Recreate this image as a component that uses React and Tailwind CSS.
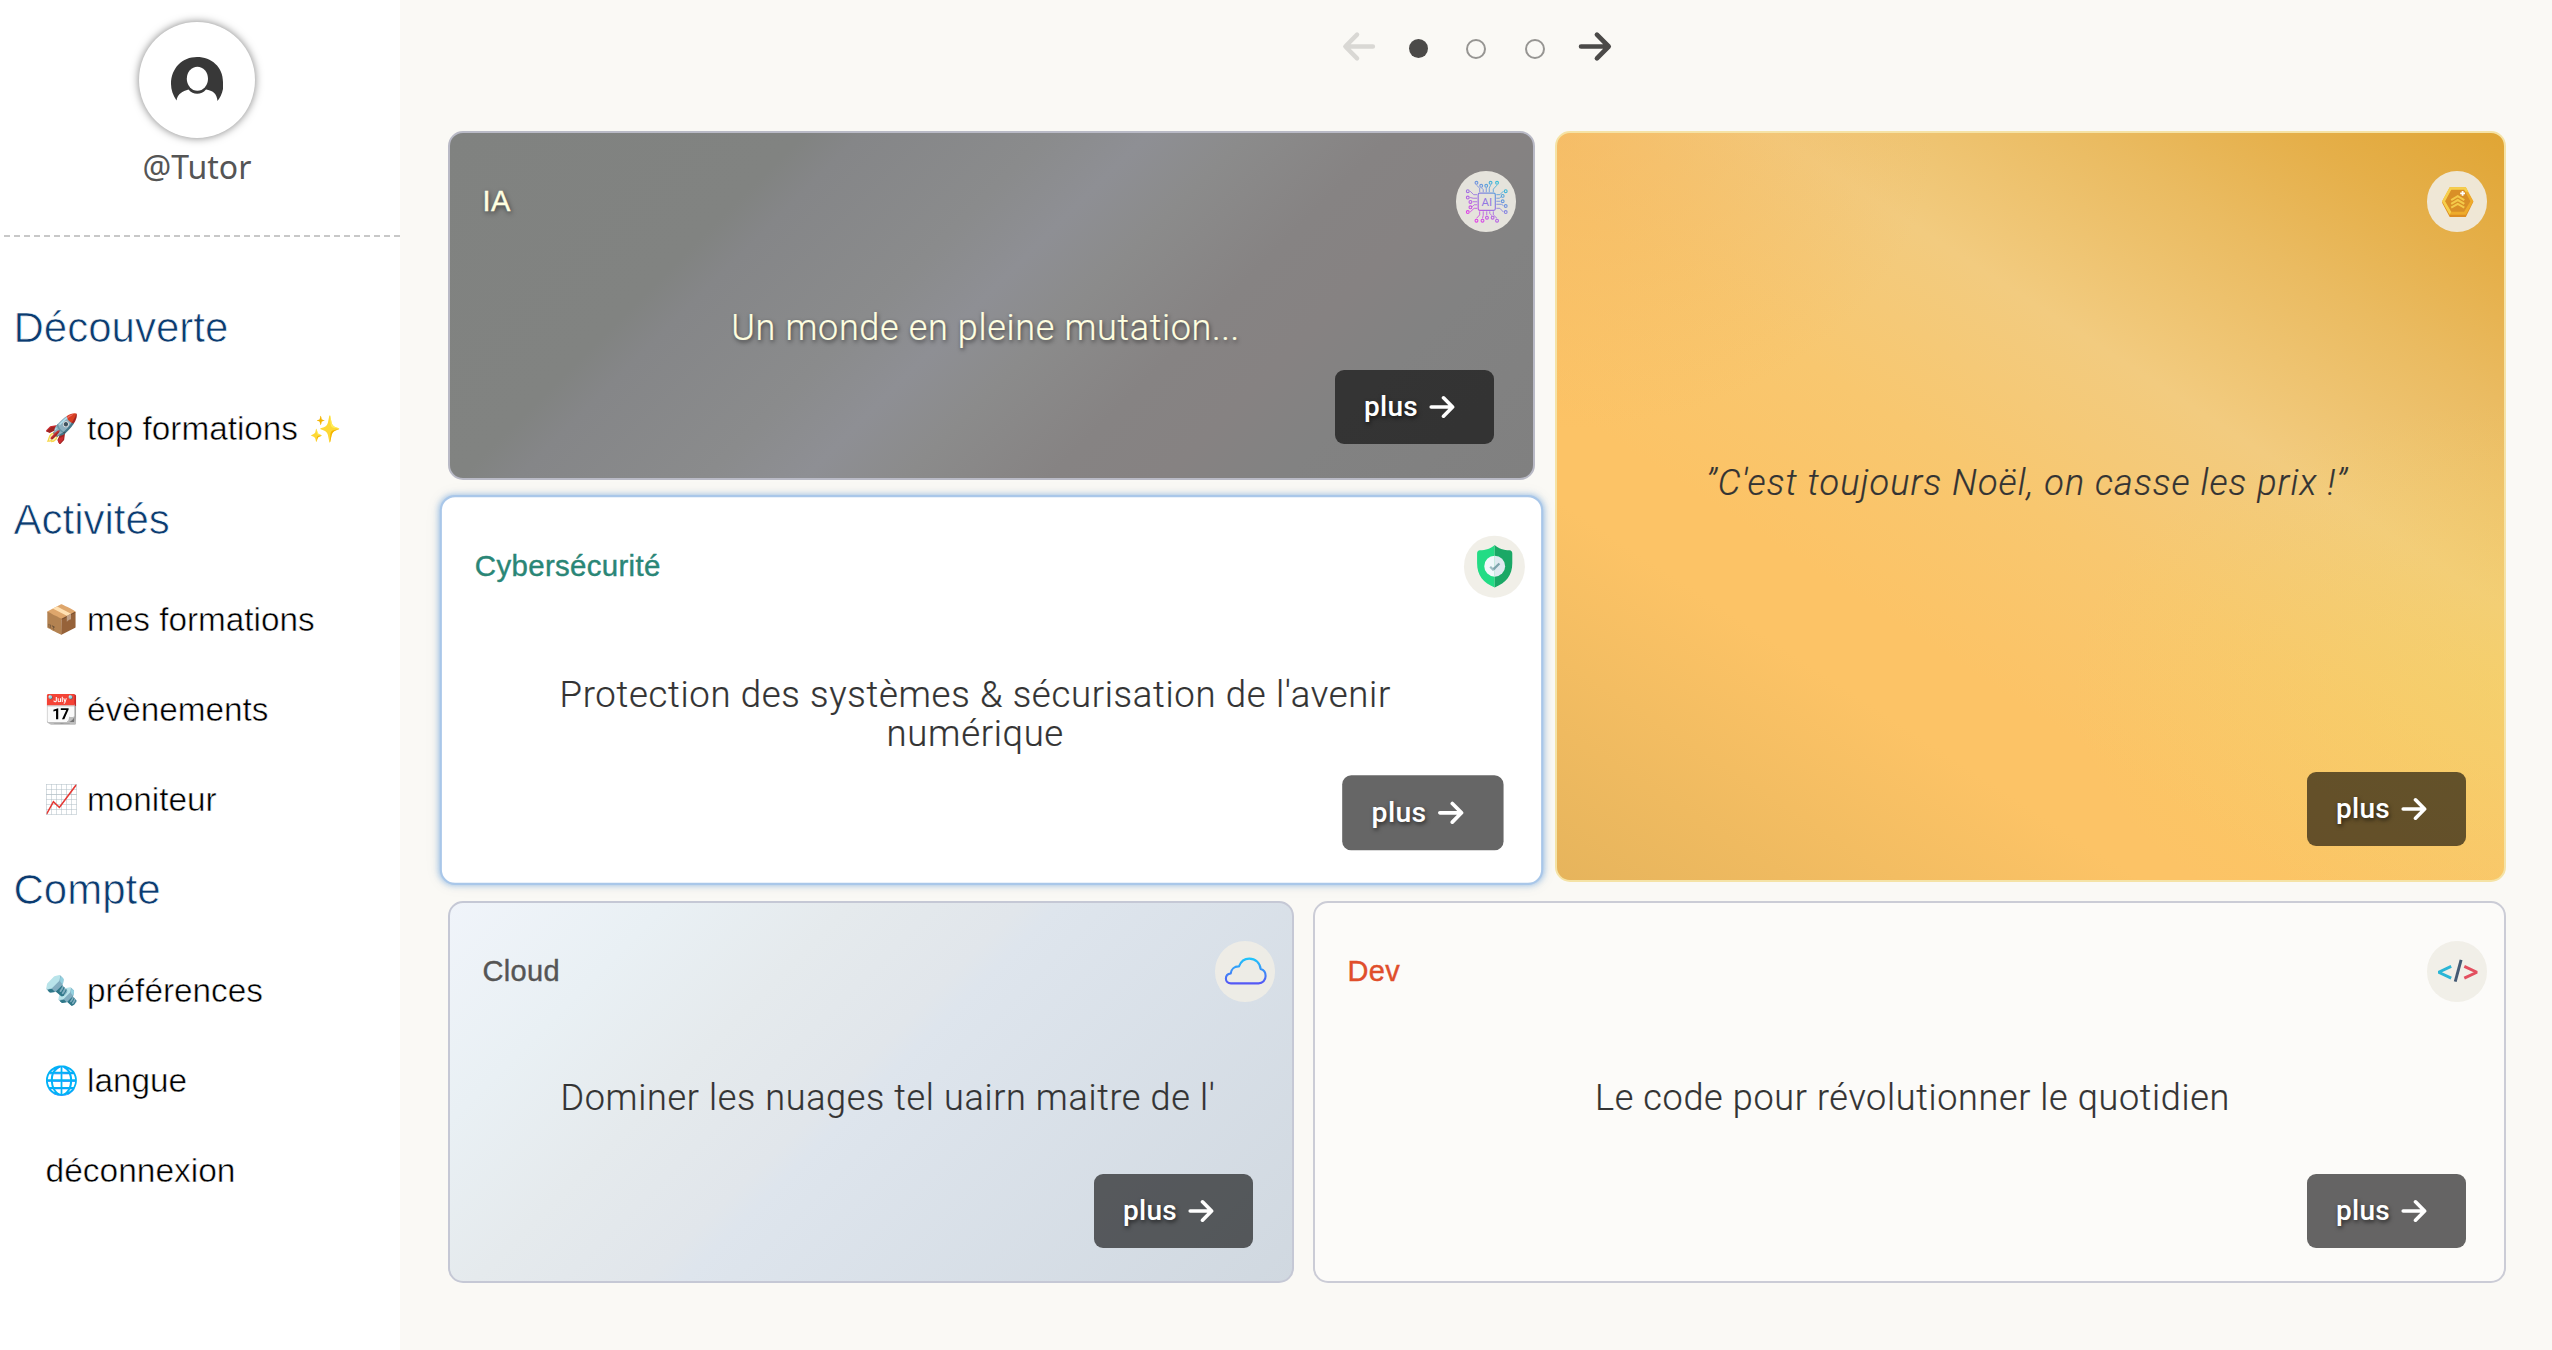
import React from "react";

function Arrow({ className, strokeWidth = 4 }) {
  return (
    <svg className={className} viewBox="0 0 26 24" fill="none" stroke="currentColor" strokeWidth={strokeWidth} strokeLinecap="round" strokeLinejoin="round">
      <path d="M2.2 12H23.2M14.5 2.8L23.6 12L14.5 21.2" />
    </svg>
  );
}

const traces = [
  ["M23.5 21V17L20.3 14", 20.3, 11.7],
  ["M27 21V18.5L25 16.5", 25, 14.7],
  ["M30 21V16.5", 30, 14.7],
  ["M33 21V17L34.3 14", 34.3, 11.7],
  ["M37 21V18L40.7 14", 40.7, 11.7],
  ["M21 23.5H17.5L14 20", 11.7, 20],
  ["M21 27H17L14 26.3", 11.7, 26.3],
  ["M21 30.5H16.5", 14.3, 30.7],
  ["M21 33.5H18L16 35.5", 14.3, 36],
  ["M21 37H18L14 40.7", 11.7, 40.7],
  ["M40 23.5H43.5L47 20", 49.3, 20],
  ["M40 27H43L44.8 25.5", 46.3, 24.7],
  ["M40 30H44", 46.3, 30],
  ["M40 33H45L47 34.2", 49.3, 34.7],
  ["M40 37H43.5L47 40.7", 49.3, 40.7],
  ["M23.5 40V43.5L20.3 47", 20.3, 49.3],
  ["M27 40V44L26.3 47", 26.3, 49.3],
  ["M30.5 40V44", 30.7, 46.3],
  ["M33.5 40V42L35.5 44.3", 36.3, 46.3],
  ["M37 40V43.5L40.7 47", 40.7, 49.3],
];

function AiIcon() {
  return (
    <svg viewBox="0 0 60 60" className="size-full" fill="none">
      <defs>
        <linearGradient id="ai" gradientUnits="userSpaceOnUse" x1="46" y1="12" x2="18" y2="48">
          <stop offset="0" stopColor="#2fc4d6" />
          <stop offset="0.5" stopColor="#8f7fe0" />
          <stop offset="1" stopColor="#e33fe6" />
        </linearGradient>
      </defs>
      <g stroke="url(#ai)">
        <rect x="22" y="22" width="17" height="17" rx="1.5" strokeWidth="1.2" />
        {traces.map(([d, cx, cy]) => (
          <g key={d}>
            <path d={d} strokeWidth="0.9" />
            <circle cx={cx} cy={cy} r="1.4" strokeWidth="1.1" />
          </g>
        ))}
      </g>
      <text x="30.6" y="34.6" textAnchor="middle" fill="#9278e2" fontSize="11.5" fontFamily="Roboto, sans-serif" fontWeight="400">AI</text>
    </svg>
  );
}

function ShieldIcon() {
  return (
    <svg viewBox="0 0 60 60" className="size-full">
      <path d="M30 9C26.5 12.5 21 14 15.5 14.3C13.8 14.5 12.9 15.5 12.8 17.3V27C12.8 38.5 19 46.5 30 50.5Z" fill="#22dc85" />
      <path d="M30 9C33.5 12.5 39 14 44.5 14.3C46.2 14.5 47.1 15.5 47.2 17.3V27C47.2 38.5 41 46.5 30 50.5Z" fill="#1aa866" />
      <path d="M30 19.6A10.2 10.2 0 0 0 30 40Z" fill="#f1f8fb" />
      <path d="M30 19.6A10.2 10.2 0 0 1 30 40Z" fill="#dfe9f0" />
      <path d="M25.6 30.3L28.4 33L30 31.8" fill="none" stroke="#9dbcc3" strokeWidth="2.2" />
      <path d="M29 32.6L34.6 27.2" fill="none" stroke="#7ea3ad" strokeWidth="2.2" />
    </svg>
  );
}

function MedalIcon() {
  return (
    <svg viewBox="0 0 60 60" className="size-full">
      <path d="M22.5 17.5H38.5L46 30.5L38.5 45.7H22.5L15 31.5Z" fill="#dd8d22" />
      <path d="M22.5 16H38.5L46 30L38.5 43.3H22.5L15 30Z" fill="#eeab2b" />
      <path d="M22.5 16H38.5L41 20.5L24 18.8L18.2 30L24 40.5L22.5 43.3L15 30Z" fill="#f6cf4c" />
      <path d="M24.2 18.5H36.8L43 30L36.8 40.3H24.2L18 30Z" fill="#d98f27" />
      <g fill="none" stroke="#f4ca49" strokeWidth="2">
        <path d="M24 28.8L30.5 25L37 28.8" />
        <path d="M24 32.6L30.5 28.8L37 32.6" />
        <path d="M24 36.4L30.5 32.6L37 36.4" />
      </g>
      <path d="M35.3 19.8V24.6M32.9 22.2H37.7" stroke="#fff" strokeWidth="1.8" />
    </svg>
  );
}

function CloudIcon() {
  return (
    <svg viewBox="0 0 60 60" className="size-full" fill="none">
      <defs>
        <linearGradient id="cloud" x1="0" y1="0" x2="0" y2="1">
          <stop offset="0" stopColor="#20c4fb" />
          <stop offset="1" stopColor="#5558f5" />
        </linearGradient>
      </defs>
      <path
        d="M15.8 42C12.8 42 10.8 39.8 10.8 37.2C10.8 34.4 12.8 32.5 15.6 32.2C16 27.8 19.4 25 23.8 25.2C25.6 20.4 29.6 17.5 34 17.5C40 17.5 44.8 21.8 45.2 27.8C48.3 28.6 50.2 31.4 50.2 34.8C50.2 39 47.2 42 43.2 42Z"
        stroke="url(#cloud)"
        strokeWidth="2.1"
        strokeLinejoin="round"
      />
    </svg>
  );
}

function CodeIcon() {
  return (
    <svg viewBox="0 0 60 60" className="size-full" fill="none" strokeWidth="2.9" strokeLinejoin="bevel">
      <path d="M24 25.2L11.5 31L24 36.8" stroke="#2bb6d6" />
      <path d="M33.8 18.8L28 40.2" stroke="#445a74" />
      <path d="M37 25.2L49.5 31L37 36.8" stroke="#e34f5f" />
    </svg>
  );
}

function Card({ className, title, titleClass, icon, iconClass = "mr-[17px]", text, textClass, buttonClass = "mr-[38px]" }) {
  return (
    <article className={`flex shrink-0 flex-col rounded-[15px] border-2 pt-[38px] ${className}`}>
      <header className="flex h-[61px] items-center justify-between pl-[32.5px]">
        <h3 className={`font-['Liberation_Sans',sans-serif] text-[29px] leading-none tracking-[0.32px] [-webkit-text-stroke:0.4px_currentColor] ${titleClass}`}>{title}</h3>
        <span className={`size-[60.5px] shrink-0 overflow-hidden rounded-full bg-[#f0ede6]/90 ${iconClass}`}>{icon}</span>
      </header>
      <p className={`text-center text-4xl leading-[38px] font-light tracking-[0.66px] [-webkit-text-stroke:0.2px_currentColor] ${textClass}`}>{text}</p>
      <button className={`mt-auto flex h-[74px] w-[159px] items-center self-end rounded-[9px] bg-black/60 pl-[29px] text-white ${buttonClass}`}>
        <span className="w-[65px] text-left text-[28px] leading-none font-medium tracking-[0.3px] [text-shadow:1px_2px_4px_rgba(0,0,0,0.6)]">plus</span>
        <Arrow className="h-6 w-[26px]" strokeWidth={3.6} />
      </button>
    </article>
  );
}

function Heading({ children, className }) {
  return (
    <h2 className={`h-12 pl-[13.5px] text-[42px] leading-[48px] text-[#0b3b70] [-webkit-text-stroke:0.7px_white] ${className}`}>{children}</h2>
  );
}

function Item({ emoji, children, after }) {
  return (
    <li className="flex h-[90px] items-center pl-[44px] text-[33.3px] leading-[90px] text-black">
      {emoji && <span className="w-[43px] text-[28px]">{emoji}</span>}
      <span className="[-webkit-text-stroke:0.5px_white]">{children}</span>
      {after && <span className="ml-[11px] text-[26px]">{after}</span>}
    </li>
  );
}

function Sidebar() {
  return (
    <aside className="w-[400px] shrink-0 bg-white font-['Liberation_Sans','Noto_Color_Emoji',sans-serif]">
      <div className="flex flex-col items-center pt-[22px] pr-[6px]">
        <div className="flex size-[116px] items-start justify-center rounded-full bg-white pt-[35px] shadow-[0_0_9px_rgba(0,0,0,0.5)]">
          <svg viewBox="0 0 52 44" className="h-11 w-[52px]">
            <path d="M5.5 43.5C2 38.5 0 32.5 0 27C0 11 11.5 0 26 0C40.5 0 52 10 52 25V32C51 37 49 41 46.5 44C46 36.5 41.5 33.5 35 32.5C32.5 35.5 29.5 36.8 26.2 36.8C22.8 36.8 20 35.5 17.5 32.5C11.5 34 6.5 37 5.5 43.5Z" fill="#383838" />
            <ellipse cx="26.4" cy="21.8" rx="10.6" ry="12" fill="#fff" />
          </svg>
        </div>
        <p className="mt-[7px] font-['Noto_Sans',sans-serif] text-[32px] leading-[44px] text-[#555]">@Tutor</p>
      </div>
      <div className="mt-[46px] ml-1 h-0.5 bg-[repeating-linear-gradient(90deg,#c8c8c8_0_6px,transparent_6px_10px)]" />
      <nav className="pt-px">
        <Heading className="mt-[66px] mb-8">Découverte</Heading>
        <ul>
          <Item emoji="🚀" after="✨">top formations</Item>
        </ul>
        <Heading className="mt-[22px] mb-[31px]">Activités</Heading>
        <ul>
          <Item emoji="📦">mes formations</Item>
          <Item emoji="📆">évènements</Item>
          <Item emoji="📈">moniteur</Item>
        </ul>
        <Heading className="mt-[21px] mb-8">Compte</Heading>
        <ul>
          <Item emoji="🔩">préférences</Item>
          <Item emoji="🌐">langue</Item>
          <li className="flex h-[89px] items-center pl-[45.5px] text-[33.5px] leading-[88px] text-black [-webkit-text-stroke:0.5px_white]">déconnexion</li>
        </ul>
      </nav>
    </aside>
  );
}

export default function App() {
  return (
    <div className="flex h-[1350px] w-[2552px] overflow-hidden bg-[#faf9f5] font-['Roboto',sans-serif] text-[#333]">
      <Sidebar />
      <main className="pl-12">
        <div className="flex h-[131px] items-start pt-[31px] pl-[894px]">
          <Arrow className="h-[31px] w-[34px] rotate-180 text-[#d9d8d4]" strokeWidth={3.4} />
          <span className="mt-2 ml-[33px] size-[19px] rounded-full bg-[#4b4a48]" />
          <span className="mt-2 ml-[38px] size-[20px] rounded-full border-2 border-[#969592]" />
          <span className="mt-2 ml-[39px] size-[20px] rounded-full border-2 border-[#969592]" />
          <Arrow className="ml-[33px] h-[31px] w-[34px] text-[#4b4a48]" strokeWidth={3.6} />
        </div>
        <div className="flex gap-5">
          <div className="flex w-[1087px] flex-col gap-[18px]">
            <Card
              className="h-[349px] border-[#b9bac6] bg-[linear-gradient(135deg,#808280_0%,#818381_25%,#858688_29%,#8a8b8c_42%,#8e8f94_49%,#8b8b8b_56%,#868383_66%,#868282_74%,#828282_82%,#808080_100%)] bg-origin-border pb-[34px]"
              title="IA"
              titleClass="text-[#ffffe0] [text-shadow:1px_2px_5px_rgba(0,0,0,0.6)]"
              icon={<AiIcon />}
              text="Un monde en pleine mutation..."
              textClass="mt-[77px] pr-3 text-[#ffffe0] [text-shadow:1px_2px_4px_rgba(0,0,0,0.6)]"
              buttonClass="mr-[39px]"
            />
            <Card
              className="h-[384px] scale-[1.015] border-[#a9c7e9] bg-white pb-[32px] shadow-[0_0_6px_rgba(96,156,222,0.65),0_0_18px_rgba(0,0,0,0.05)]"
              title="Cybersécurité"
              titleClass="text-[#2a8676]"
              icon={<ShieldIcon />}
              iconClass="mr-4"
              text="Protection des systèmes & sécurisation de l'avenir numérique"
              textClass="mt-[77px] pl-[103px] pr-[135px]"
              buttonClass="mr-[37px]"
            />
          </div>
          <Card
            className="h-[751px] w-[951px] border-[#f5e3a6] bg-[radial-gradient(ellipse_48%_38%_at_102%_74%,rgba(246,216,88,0.4),transparent),radial-gradient(ellipse_40%_40%_at_0%_0%,rgba(245,178,90,0.5),transparent),linear-gradient(213deg,#e0a534_0%,#e5af49_10%,#eabb61_20%,#f2cb7f_35%,#f8c76f_50%,#fcc366_65%,#fcc366_72%,#e6b45c_100%)] bg-origin-border pb-[34px]"
            title=""
            titleClass=""
            icon={<MedalIcon />}
            text="”C'est toujours Noël, on casse les prix !”"
            textClass="mt-[232px] pr-[7px] italic tracking-[1.1px]!"
          />
        </div>
        <div className="mt-[19px] flex gap-[19px]">
          <Card
            className="h-[382px] w-[846px] border-[#c5c8d5] bg-[linear-gradient(135deg,#f0f4fa_0%,#e9f0f4_18%,#e5eaed_33%,#e1e6eb_47%,#dee5ed_50%,#d0d8e0_100%)] bg-origin-border pb-[33px]"
            title="Cloud"
            titleClass="text-[#555]"
            icon={<CloudIcon />}
            text="Dominer les nuages tel uairn maitre de l'"
            textClass="mt-[77px] pl-[34px]"
            buttonClass="mr-[39px]"
          />
          <Card
            className="h-[382px] w-[1193px] border-[#cbccd6] bg-[#fcfbf9] pb-[33px]"
            title="Dev"
            titleClass="text-[#e04e2b]"
            icon={<CodeIcon />}
            text="Le code pour révolutionner le quotidien"
            textClass="mt-[77px] pl-[6px]"
          />
        </div>
      </main>
    </div>
  );
}
